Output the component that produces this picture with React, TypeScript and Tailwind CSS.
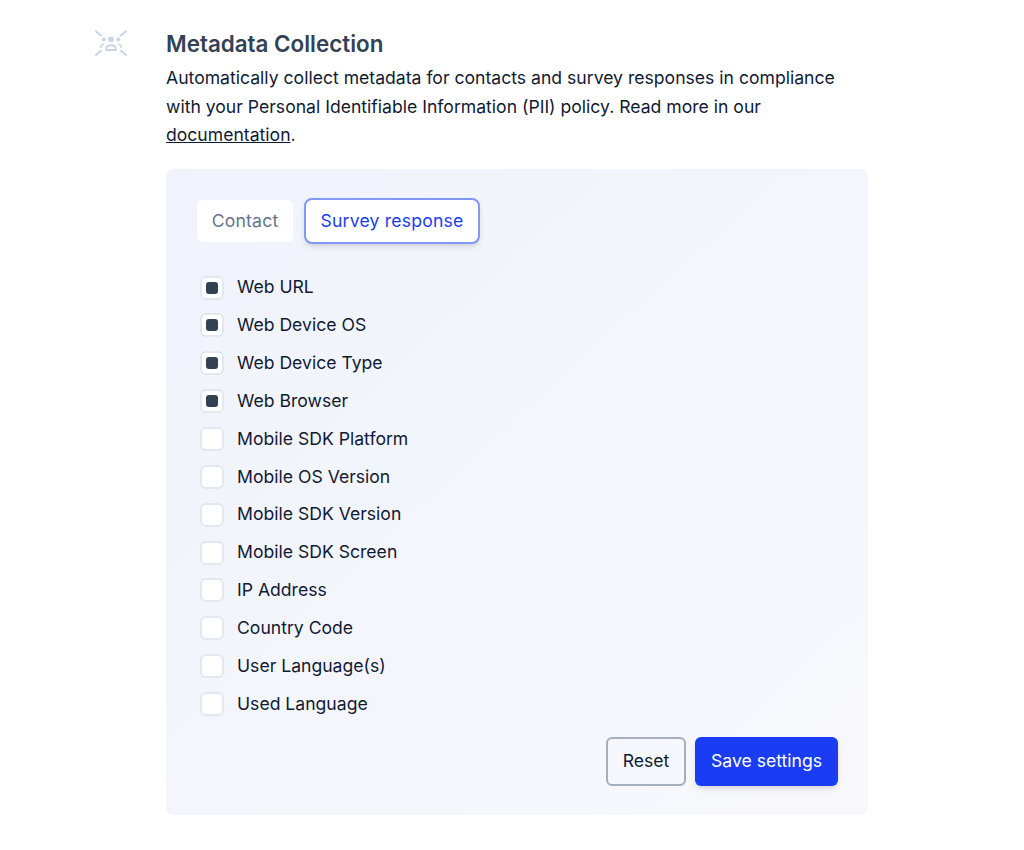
import { useState } from 'react';

const fields = [
  { label: 'Web URL', checked: true },
  { label: 'Web Device OS', checked: true },
  { label: 'Web Device Type', checked: true },
  { label: 'Web Browser', checked: true },
  { label: 'Mobile SDK Platform', checked: false },
  { label: 'Mobile OS Version', checked: false },
  { label: 'Mobile SDK Version', checked: false },
  { label: 'Mobile SDK Screen', checked: false },
  { label: 'IP Address', checked: false },
  { label: 'Country Code', checked: false },
  { label: 'User Language(s)', checked: false },
  { label: 'Used Language', checked: false },
];

function PeopleIcon() {
  return (
    <svg width="32" height="26" viewBox="0 0 32 26" fill="none" className="text-[#cbd5e1]">
      <path d="M1 1.2 L6 5.4 M31 1.2 L26 5.4 M1 25 L6 20.8 M31 25 L26 20.8" stroke="currentColor" strokeWidth="2" strokeLinecap="round" />
      <circle cx="16" cy="9.3" r="2.9" fill="currentColor" />
      <circle cx="8.8" cy="9.6" r="2" fill="currentColor" />
      <circle cx="23.2" cy="9.6" r="2" fill="currentColor" />
      <path d="M11.2 20 C10.8 16.5 13 15.2 16 15.2 C19 15.2 21.2 16.5 20.8 20 Z" stroke="currentColor" strokeWidth="2" strokeLinejoin="round" />
      <path d="M6 17.5 C6 15.2 7 14.2 8.5 14.2 M26 17.5 C26 15.2 25 14.2 23.5 14.2" stroke="currentColor" strokeWidth="1.6" strokeLinecap="round" />
    </svg>
  );
}

export default function App() {
  const [tab, setTab] = useState('survey');
  return (
    <div className="min-h-[850px] bg-white font-['Inter',sans-serif] text-[#111a33] flex pl-[95px] pt-[30px]">
      <div className="w-[71px] shrink-0"><PeopleIcon /></div>
      <div className="w-[702px]">
        <h2 className="text-[22.4px] leading-[28px] font-semibold text-[#334155]">Metadata Collection</h2>
        <p className="mt-[6px] text-[17.6px] leading-[28.5px] w-[690px]">
          Automatically collect metadata for contacts and survey responses in compliance with your Personal Identifiable Information (PII) policy. Read more in our <a className="underline">documentation</a>.
        </p>
        <div className="mt-[19.5px] h-[646px] rounded-lg bg-gradient-to-br from-[#f0f3fc] to-[#f8f8fc] pl-[30px] pr-[30px] pt-[29px]">
          <div className="flex items-center gap-[11px] ml-[1px]">
            <button onClick={() => setTab('contact')} className="h-[42px] w-[96px] rounded-md bg-white text-[17.6px] font-normal text-[#64748b] tracking-[0.2px]">Contact</button>
            <button onClick={() => setTab('survey')} className="h-[46px] w-[176px] rounded-lg bg-white border-2 border-[#8398f6] text-[17.6px] font-normal text-[#1a3cf5] shadow-md tracking-[0.2px]">Survey response</button>
          </div>
          <ul className="mt-[24.7px] ml-[4px] flex flex-col">
            {fields.map(f => (
              <li key={f.label} className="h-[37.85px] flex items-center gap-[13px]">
                <span className="w-6 h-6 rounded-md bg-white border-2 border-[#e2e8f0] flex items-center justify-center">
                  {f.checked && <span className="w-3 h-3 rounded-[3px] bg-[#334155]" />}
                </span>
                <span className="text-[17.6px]">{f.label}</span>
              </li>
            ))}
          </ul>
          <div className="mt-[14.1px] flex justify-end gap-[9px]">
            <button className="h-[49px] w-[80px] rounded-md border-2 border-[#a3afc0] text-[17.6px] font-normal">Reset</button>
            <button className="h-[49px] w-[143px] rounded-md bg-[#1a3cf5] text-white text-[17.6px] font-normal shadow-md">Save settings</button>
          </div>
        </div>
      </div>
      <span className="hidden">{tab}</span>
    </div>
  );
}
